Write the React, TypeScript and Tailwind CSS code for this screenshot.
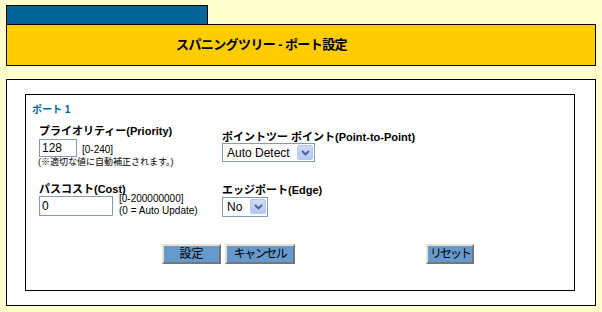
import React from "react";

const FONT = { fontFamily: '"Liberation Sans", "Noto Sans CJK JP", sans-serif' };

function Chevron() {
  return (
    <div className="ml-auto mr-[1px] flex h-[15px] w-[16px] items-center justify-center rounded-[2px] border border-[#b7c8f0] bg-gradient-to-b from-[#cddcfc] to-[#b4c7f5]">
      <svg width="9" height="6" viewBox="0 0 9 6">
        <path d="M1 1 L4.5 4.5 L8 1" fill="none" stroke="#4d6185" strokeWidth="1.8" />
      </svg>
    </div>
  );
}

function Select({ label, w, h }: { label: string; w: string; h: string }) {
  return (
    <div className={`flex items-center border border-[#7f9db9] bg-white pl-[4px] ${w} ${h}`}>
      <span className="text-[12px] leading-[14px] text-black">{label}</span>
      <Chevron />
    </div>
  );
}

function Btn({ label, w, t }: { label: string; w: string; t: string }) {
  return (
    <div
      className={`flex h-[20px] items-center justify-center whitespace-nowrap border-2 border-t-[#e6e2d6] border-l-[#e6e2d6] border-b-[#767676] border-r-[#767676] bg-[#6699cc] text-[12px] leading-[14px] text-black ${t} ${w}`}
    >
      {label}
    </div>
  );
}

export default function App() {
  return (
    <div className="min-h-screen bg-[#ffffcc] px-[6px] pt-[5px]" style={FONT}>
      <div className="h-[19px] w-[202px] border border-b-0 border-black bg-[#006699]" />
      <div className="flex h-[42px] items-center border border-black bg-[#ffcc00] pl-[169px]">
        <span className="text-[13px] font-bold leading-[16px] tracking-[-0.6px] text-black">
          スパニングツリー - ポート設定
        </span>
      </div>
      <div className="mt-[13px] h-[227px] border border-black bg-white pb-[14px] pl-[18px] pr-[20px] pt-[14px]">
        <div className="h-full border border-black pl-[6px] pt-[9px]">
          <div className="h-[12px] text-[10px] font-bold leading-[12px] text-[#006699]">ポート 1</div>
          <div className="ml-[7px] mt-[9px] grid grid-cols-[183px_auto] items-center gap-y-[15px]">
            <div>
              <div className="text-[11px] font-bold leading-[13px] text-black">プライオリティー(Priority)</div>
              <div className="mt-[1px] flex items-end">
                <div className="flex h-[18px] w-[38px] items-center border border-[#7f9db9] bg-white pl-[2px] text-[12px] leading-[14px] text-black">
                  128
                </div>
                <span className="mb-[1px] ml-[5px] text-[10px] leading-[12px] text-black">[0-240]</span>
              </div>
              <div className="-ml-[1px] text-[9px] leading-[11px] text-black">(※適切な値に自動補正されます。)</div>
            </div>
            <div>
              <div className="text-[11px] font-bold leading-[13px] text-black">ポイントツー ポイント(Point-to-Point)</div>
              <div className="mt-[-1px]">
                <Select label="Auto Detect" w="w-[93px]" h="h-[19px]" />
              </div>
            </div>
            <div>
              <div className="text-[11px] font-bold leading-[13px] text-black">パスコスト(Cost)</div>
              <div className="flex">
                <div className="flex h-[20px] w-[74px] items-center border border-[#7f9db9] bg-white pl-[2px] text-[12px] leading-[14px] text-black">
                  0
                </div>
                <div className="ml-[6px] -mt-[3px] text-[10px] leading-[12px] text-black">
                  <div>[0-200000000]</div>
                  <div>(0 = Auto Update)</div>
                </div>
              </div>
            </div>
            <div>
              <div className="text-[11px] font-bold leading-[13px] text-black">エッジポート(Edge)</div>
              <Select label="No" w="w-[46px]" h="h-[20px]" />
            </div>
          </div>
          <div className="mt-[27px] flex pl-[130px]">
            <Btn label="設定" w="w-[59px]" t="tracking-[0px]" />
            <div className="ml-[4px]">
              <Btn label="キャンセル" w="w-[70px]" t="tracking-[-1.5px]" />
            </div>
            <div className="ml-[131px]">
              <Btn label="リセット" w="w-[48px]" t="tracking-[-2px]" />
            </div>
          </div>
        </div>
      </div>
    </div>
  );
}
